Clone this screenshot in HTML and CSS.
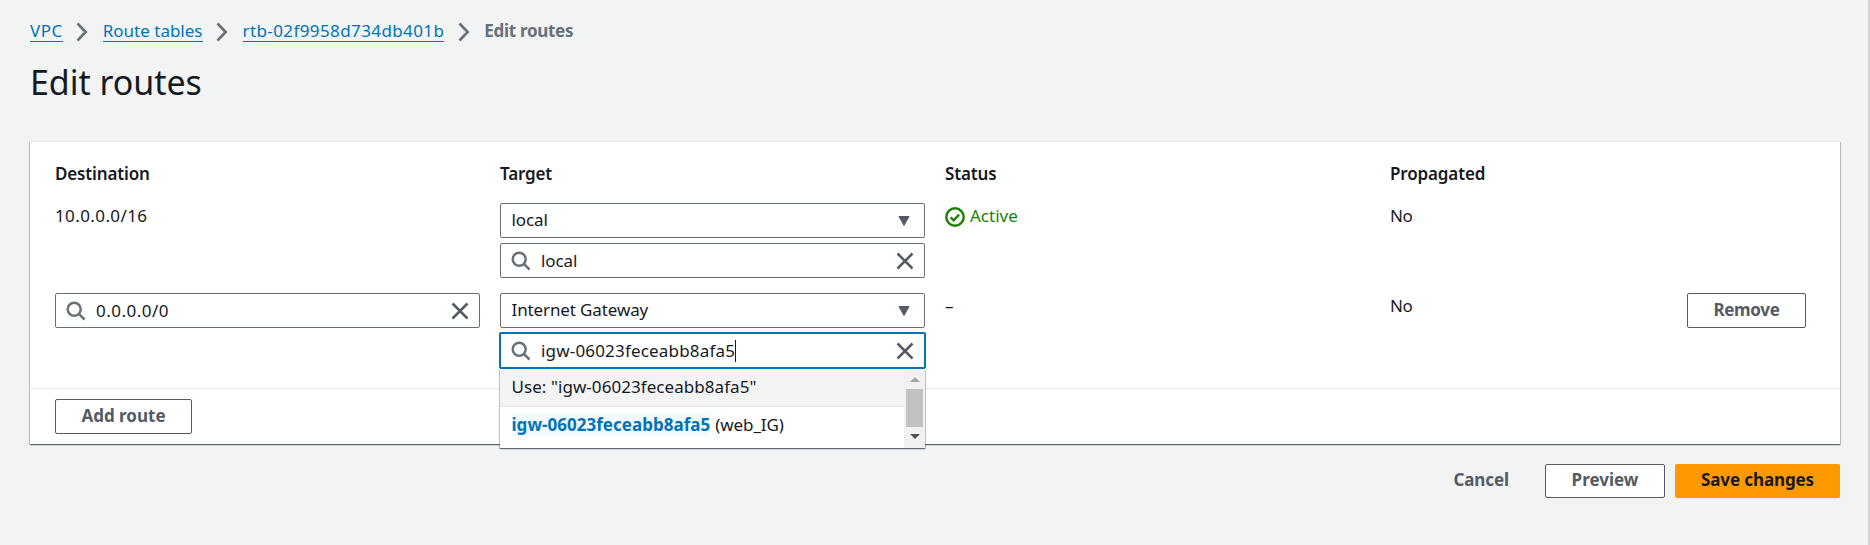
FILE: index.html
```
<!DOCTYPE html>
<html lang="en">
<head>
<meta charset="utf-8">
<title>Edit routes</title>
<link rel="stylesheet" href="styles.css">
</head>
<body>
<svg class="defs" aria-hidden="true">
  <symbol id="search" viewBox="0 0 20 20"><circle cx="8.2" cy="8.2" r="6.5"/><path d="M12.9 12.9l5.6 5.6"/></symbol>
  <symbol id="close" viewBox="0 0 20 20"><path d="M2.5 2.5l15 15M17.5 2.5l-15 15"/></symbol>
  <symbol id="chevron" viewBox="0 0 12 20"><path d="M1.5 1.5L9.700 10l-8.200 8.500"/></symbol>
</svg>
<main class="page">
  <nav class="breadcrumbs">
    <a class="crumb crumb-vpc">VPC</a><svg class="chevron"><use href="#chevron"/></svg>
    <a class="crumb">Route tables</a><svg class="chevron"><use href="#chevron"/></svg>
    <a class="crumb digits">rtb-02f9958d734db401b</a><svg class="chevron"><use href="#chevron"/></svg>
    <span class="crumb-current">Edit routes</span>
  </nav>
  <h1 class="title">Edit routes</h1>
  <section class="card">
    <div class="routes">
      <div class="grid heads">
        <div>Destination</div><div>Target</div><div>Status</div><div>Propagated</div>
      </div>
      <div class="grid row">
        <div class="value digits">10.0.0.0/16</div>
        <div class="stack">
          <div class="field"><span class="text tight">local</span><svg class="caret-down" viewBox="0 0 12 10"><path d="M1 .5h10L6 9.500z"/></svg></div>
          <div class="field search"><svg class="icon lens"><use href="#search"/></svg><span class="text tight">local</span><svg class="icon clear"><use href="#close"/></svg></div>
        </div>
        <div class="value status"><svg class="check" viewBox="0 0 20 20"><circle cx="10" cy="10" r="8.700"/><path d="M5.600 10.300l3.100 3 5.400-5.600"/></svg>Active</div>
        <div class="value no">No</div>
      </div>
      <div class="grid row">
        <div class="field search"><svg class="icon lens"><use href="#search"/></svg><span class="text dest">0.0.0.0/0</span><svg class="icon clear"><use href="#close"/></svg></div>
        <div class="stack">
          <div class="field"><span class="text tight">Internet Gateway</span><svg class="caret-down" viewBox="0 0 12 10"><path d="M1 .5h10L6 9.500z"/></svg></div>
          <div class="field search focused"><svg class="icon lens"><use href="#search"/></svg><span class="text igw">igw-06023feceabb8afa5</span><span class="cursor"></span><svg class="icon clear"><use href="#close"/></svg>
            <div class="dropdown">
              <div class="options">
                <div class="option active-option">Use: "igw-06023feceabb8afa5"</div>
                <div class="option second"><mark class="match">igw-06023feceabb8afa5</mark><span class="name">(web_IG)</span></div>
              </div>
              <div class="scrollbar"><svg class="arrow up" viewBox="0 0 10 5"><path d="M0 5L5 0l5 5z"/></svg><div class="thumb"></div><svg class="arrow down" viewBox="0 0 10 5"><path d="M0 0l5 5 5-5z"/></svg></div>
            </div>
          </div>
        </div>
        <div class="value">–</div>
        <div class="value no">No</div>
        <button class="button remove">Remove</button>
      </div>
    </div>
    <div class="card-footer"><button class="button add">Add route</button></div>
  </section>
  <div class="actions">
    <button class="link-button">Cancel</button>
    <button class="button preview">Preview</button>
    <button class="button primary">Save changes</button>
  </div>
</main>
</body>
</html>
```
FILE: styles.css
```
* { box-sizing: border-box; }
body {
  margin: 0;
  background: #f2f3f3;
  color: #16191f;
  font: 17px/22px "Noto Sans", "Open Sans", sans-serif;
}
.defs { display: none; }
.page {
  height: 545px;
  padding: 20px 28px 0 30px;
  border-right: 2px solid #d0d3d4;
}
svg { fill: none; flex: none; }

.breadcrumbs { display: flex; height: 22px; }
.crumb { color: #0073bb; border-bottom: 1px solid #0073bb; height: 22px; white-space: nowrap; }
.crumb-vpc { letter-spacing: .5px; }
.digits { letter-spacing: .4px; }
.crumb-current { color: #687078; font-weight: 700; letter-spacing: -.3px; }
.chevron { width: 12px; height: 20px; margin: 2px 14.500px 0 13.500px; stroke: #687078; stroke-width: 2.6; }

.title { margin: 18px 0 37px; font-size: 34px; line-height: 44px; font-weight: 400; letter-spacing: -.05px; }

.card {
  width: 1810px;
  background: #fff;
  border-top: 1px solid #eaeded;
  box-shadow: 0 1px 1px 0 rgba(0,28,36,.45), 1px 1px 1px 0 rgba(0,28,36,.18), -1px 1px 1px 0 rgba(0,28,36,.18);
}
.routes { padding: 21px 25px 20px; }
.grid { display: grid; grid-template-columns: 425px 425px 425px 277px 119px; column-gap: 20px; align-items: start; }
.heads { font-weight: 600; letter-spacing: -.14px; margin-bottom: 18px; }
.row + .row { margin-top: 15px; }
.value { padding-top: 2px; }
.no { letter-spacing: -.5px; }
.stack { display: flex; flex-direction: column; gap: 5px; }

.field {
  position: relative;
  display: flex;
  align-items: center;
  height: 35px;
  padding: 0 14px 0 10.500px;
  background: #fff;
  border: 1px solid #687078;
  border-radius: 2px;
}
.text { padding-bottom: 2px; white-space: nowrap; }
.search .text { padding-bottom: 0; }
.tight { letter-spacing: -.12px; }
.dest { letter-spacing: .49px; }
.igw { letter-spacing: .18px; }
.caret-down { width: 12px; height: 10px; margin-left: auto; fill: #545b64; stroke: #545b64; stroke-linejoin: round; }
.search { padding: 0 9px 0 9.500px; }
.icon { width: 20px; height: 20px; stroke-width: 2.5; }
.lens { stroke: #687078; margin-right: 10.500px; }
.clear { stroke: #545b64; margin-left: auto; }
.focused { height: 37px; margin: -1px -1px -1px; border: 2px solid #0073bb; }
.cursor { width: 1px; height: 22px; background: #16191f; }

.dropdown {
  position: absolute;
  z-index: 2;
  top: 35px;
  left: -1px;
  width: 425px;
  height: 79px;
  display: flex;
  background: #fff;
  box-shadow: 0 1px 1px 0 rgba(0,28,36,.4), 1px 1px 1px 0 rgba(0,28,36,.2), -1px 1px 1px 0 rgba(0,28,36,.2);
}
.options { flex: 1; }
.option { height: 38px; padding: 7px 11.500px; white-space: nowrap; letter-spacing: .06px; }
.active-option { background: #f2f3f3; border-bottom: 1px solid #e3e6e6; }
.match { background: #f1faff; color: #0073bb; font-weight: 700; letter-spacing: .03px; }
.name { margin-left: 5px; letter-spacing: -.1px; }
.scrollbar { width: 21px; background: #f1f1f1; display: flex; flex-direction: column; align-items: center; padding-top: 8px; }
.arrow { width: 10px; height: 5px; }
.up { fill: #a3a3a3; }
.down { fill: #505050; }
.thumb { width: 17px; height: 38px; margin: 7px 0 7px; background: #c1c1c1; }

.status { display: flex; align-items: center; padding-top: 1px; color: #1d8102; }
.check { width: 20px; height: 20px; margin: 3px 5px 0 0; stroke: #1d8102; stroke-width: 2.4; }

.button, .link-button {
  font: 700 17px/22px "Noto Sans", "Open Sans", sans-serif;
  color: #545b64;
  background: #fff;
  border: 1px solid #545b64;
  border-radius: 2px;
  height: 35px;
  padding: 0 0 1px;
  white-space: nowrap;
}
.remove { width: 119px; letter-spacing: -.3px; }
.add { width: 137px; }
.card-footer { border-top: 1px solid #eaeded; padding: 10px 25px 10px; display: flex; }
.actions { display: flex; justify-content: flex-end; width: 1810px; margin-top: 20px; }
.actions button { height: 34px; padding-bottom: 2px; }
.link-button { background: none; border: 0; letter-spacing: -.1px; margin-right: 36px; }
.preview { width: 120px; margin-right: 10px; }
.primary { width: 165px; letter-spacing: -.1px; background: #ff9900; border-color: #ff9900; color: #16191f; }
```
